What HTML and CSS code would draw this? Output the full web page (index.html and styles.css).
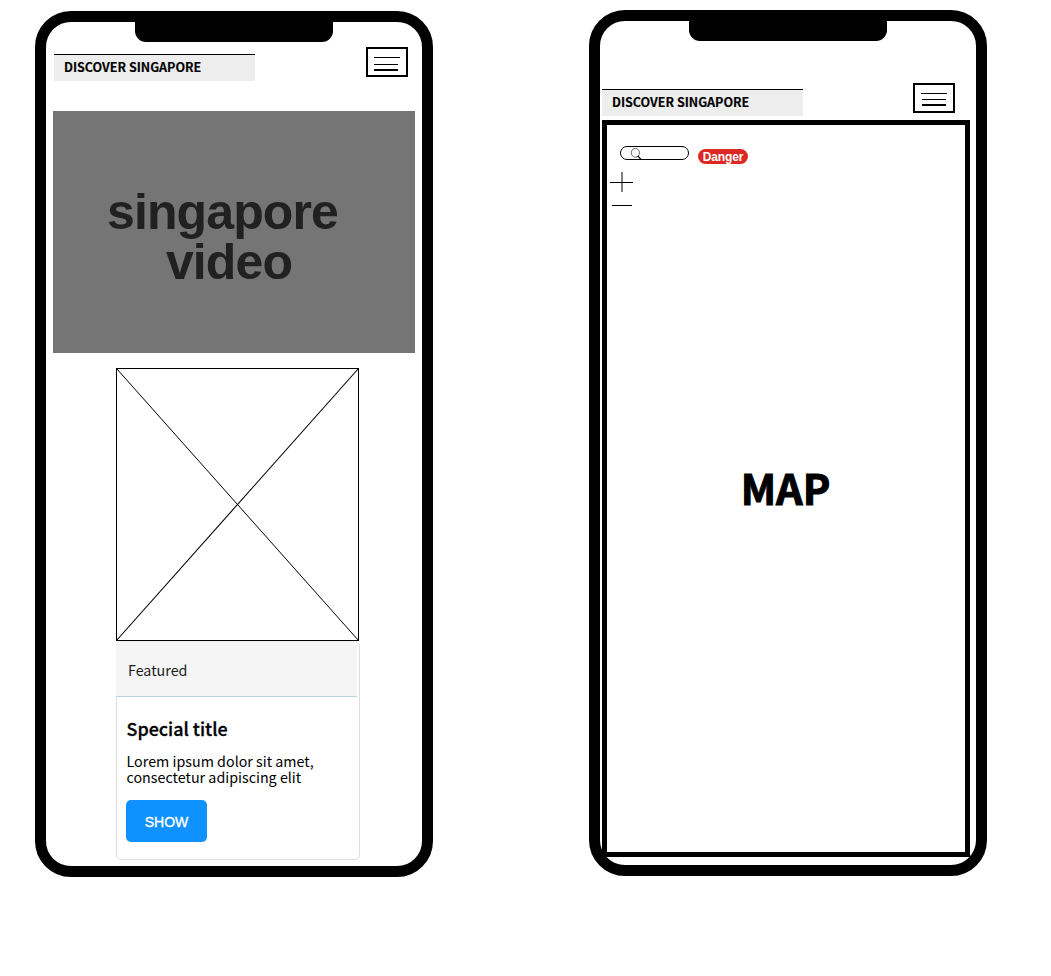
FILE: index.html
```
<!DOCTYPE html>
<html lang="en">
<head>
<meta charset="utf-8">
<title>Discover Singapore</title>
<link rel="stylesheet" href="styles.css">
</head>
<body>
<main class="board">
  <section class="phone phone-home">
    <div class="notch"></div>
    <header class="topbar">
      <div class="brand">DISCOVER SINGAPORE</div>
      <button class="menu" aria-label="Menu">
        <svg width="38" height="26" shape-rendering="crispEdges"><path d="M6 8h26v1H6zM6 15h24v1H6zM6 20h24v2H6z"/></svg>
      </button>
    </header>
    <div class="video"><p class="video-label">singapore
 video</p></div>
    <div class="feature">
      <svg class="placeholder" width="243" height="273" viewBox="0 0 243 273">
        <rect x=".5" y=".5" width="242" height="272" shape-rendering="crispEdges"/>
        <path d="M.5 .5L242.5 272.5"/>
        <path class="strong" d="M242.5 .5L.5 272.5"/>
      </svg>
      <article class="card">
        <div class="card-head">Featured</div>
        <div class="card-body">
          <h2 class="card-title">Special title</h2>
          <p class="card-text">Lorem ipsum dolor sit amet,<br>consectetur adipiscing elit</p>
          <button class="show">SHOW</button>
        </div>
      </article>
    </div>
  </section>
  <section class="phone phone-map">
    <div class="notch"></div>
    <header class="topbar">
      <div class="brand">DISCOVER SINGAPORE</div>
      <button class="menu" aria-label="Menu">
        <svg width="38" height="26" shape-rendering="crispEdges"><path d="M6 8h26v1H6zM7 14h24v1H7zM7 19h24v2H7z"/></svg>
      </button>
    </header>
    <div class="map">
      <div class="tools">
        <div class="search">
          <svg width="12" height="12" viewBox="0 0 12 12"><ellipse cx="5.4" cy="4.8" rx="4.1" ry="4.4"/><path class="handle" d="M7.8 8L11.2 11.6"/></svg>
        </div>
        <span class="badge">Danger</span>
      </div>
      <svg class="zoom" width="23" height="36" shape-rendering="crispEdges"><path class="soft" d="M11 0h2v20h-2z"/><path d="M0 10h23v1H0zM2 33h20v1H2z"/></svg>
      <h1 class="map-label">MAP</h1>
    </div>
  </section>
</main>
</body>
</html>
```
FILE: styles.css
```
* { box-sizing: border-box; }
body {
  margin: 0;
  background: #fff;
  color: #000;
  font-family: "Noto Sans CJK SC", "Noto Sans", sans-serif;
}
svg { display: block; }
button { font: inherit; color: inherit; }
.board {
  display: flex;
  align-items: flex-start;
  gap: 156px;
  padding: 10px 0 0 35px;
  height: 976px;
}
.phone {
  position: relative;
  flex: none;
  width: 398px;
  height: 866px;
  border: 11px solid #000;
  border-radius: 36px;
}
.phone-home { margin-top: 1px; padding: 25px 7px 0; }
.phone-map { padding: 62px 6px 0 2px; }
.notch {
  position: absolute;
  top: -1px;
  left: 89px;
  width: 198px;
  height: 21px;
  background: #000;
  border-radius: 0 0 11px 11px;
}
.topbar {
  display: flex;
  justify-content: space-between;
  align-items: flex-start;
}
.phone-home .topbar { padding: 0 7px 0 1.4px; height: 64px; }
.phone-map .topbar { padding: 0 15px 0 .4px; height: 37px; }
.brand {
  width: 200.4px;
  height: 27.4px;
  padding-left: 9.6px;
  border-top: 1px solid #000;
  background: #ededed;
  font-size: 12.53px;
  font-weight: 700;
  line-height: 23px;
  -webkit-text-stroke: .15px #000;
}
.phone-home .brand { margin-top: 7px; }
.phone-map .brand { margin-top: 6px; }
.menu {
  width: 42px;
  height: 30px;
  padding: 0;
  border: 2px solid #000;
  background: #fff;
}
.video {
  width: 362px;
  height: 242px;
  padding: 76px 23px 0 0;
  background: #757575;
}
.video-label {
  margin: 0;
  color: #212121;
  font: 700 50px/50px "Liberation Sans", Arial, sans-serif;
  letter-spacing: -.87px;
  text-align: center;
  white-space: pre;
}
.feature { width: 244px; margin: 15px 0 0 63px; }
.placeholder { fill: none; stroke: #000; }
.placeholder .strong { stroke-width: 1.1; }
.card {
  height: 219px;
  border: 1px solid #dedede;
  border-top-color: #eee;
  border-radius: 5px;
}
.card-head {
  width: 241px;
  height: 55px;
  margin-left: -1px;
  padding-left: 12px;
  border-bottom: 1px solid #b9d2e0;
  border-radius: 5px 5px 0 0;
  background: #f5f5f5;
  color: #1a1a1a;
  font-size: 14.3px;
  line-height: 56px;
}
.card-body { padding: 18px 9px 0; }
.card-title {
  margin: 0 0 12px .5px;
  font-size: 17.9px;
  font-weight: 500;
  line-height: 26px;
  -webkit-text-stroke: .3px #000;
}
.card-text { margin: 0 0 15px .5px; font-size: 14.3px; line-height: 16px; white-space: nowrap; }
.show {
  display: block;
  width: 81px;
  height: 42px;
  padding: 2px 0 0;
  border: 0;
  border-radius: 5px;
  background: #0f92ff;
  color: #fff;
  font: 500 14px/16px "Liberation Sans", Arial, sans-serif;
  -webkit-text-stroke: .35px #fff;
}
.map {
  width: 368px;
  height: 737px;
  border: 5px solid #000;
  padding: 21px 3px 0;
}
.tools { display: flex; gap: 9px; padding-left: 10px; }
.search {
  width: 69px;
  height: 14px;
  padding: 1px 0 0 9px;
  border: 1px solid #000;
  border-radius: 7px;
}
.search svg { fill: none; stroke: #444; stroke-width: .8; overflow: visible; }
.search .handle { stroke: #000; stroke-width: 1.2; }
.badge {
  width: 50px;
  height: 15px;
  margin-top: 3px;
  border-radius: 8px;
  background: #dc2823;
  color: #fff;
  font: 700 12px/16px "Liberation Sans", Arial, sans-serif;
  letter-spacing: -.15px;
  text-align: center;
}
.zoom { margin-top: 8px; }
.soft { fill: #808080; }
.map-label {
  margin: 249px 0 0;
  padding-right: 1px;
  font-size: 41.5px;
  font-weight: 700;
  line-height: 60px;
  text-align: center;
  -webkit-text-stroke: 1px #000;
}
```
